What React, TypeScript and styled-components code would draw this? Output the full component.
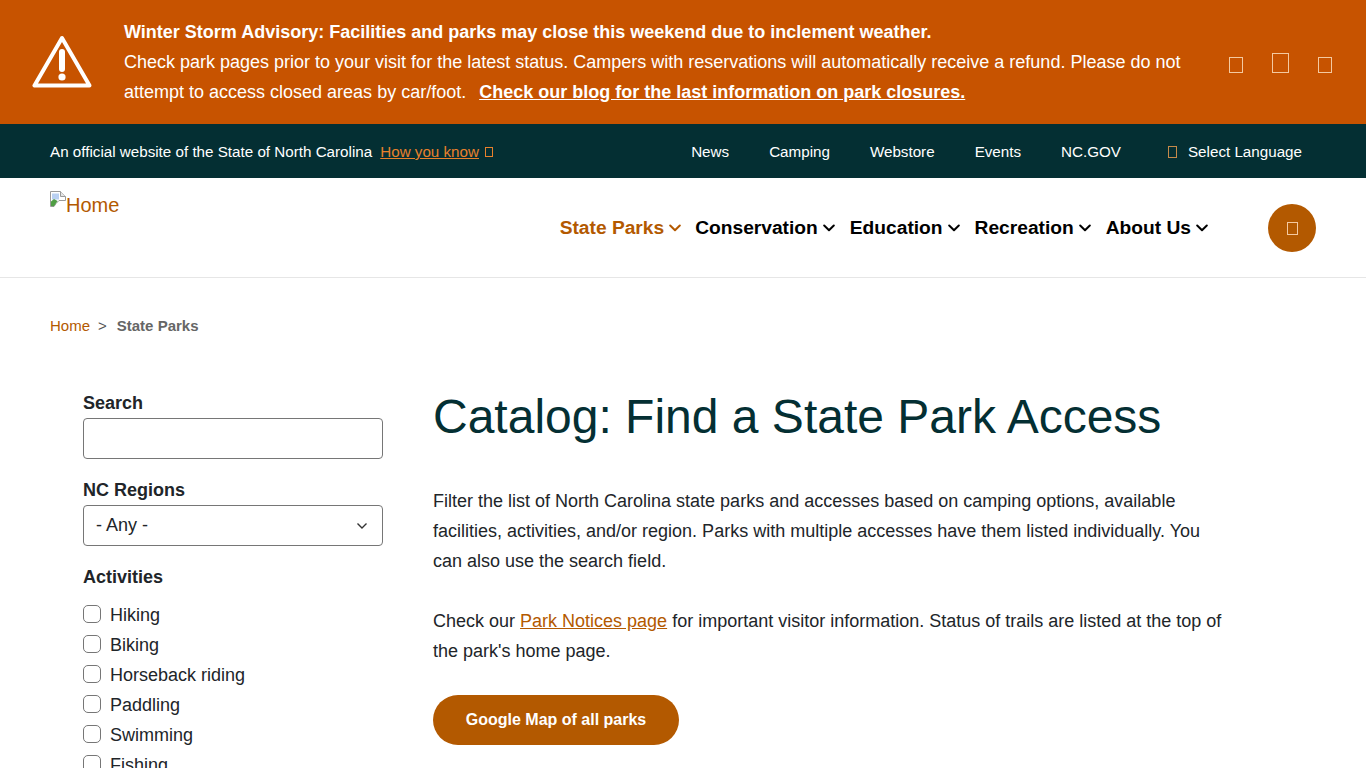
import React from "react";
import styled, { createGlobalStyle } from "styled-components";

const Global = createGlobalStyle`
  html, body { margin: 0; padding: 0; height: 768px; overflow: hidden; background: #fff; }
  body { font-family: "Liberation Sans", Arial, sans-serif; color: #212529; font-size: 18px; }
  * { box-sizing: border-box; }
`;

const ORANGE = "#c75300";
const LINK = "#b35900";
const DARK = "#042f33";

const Alert = styled.div`
  height: 124px;
  background: ${ORANGE};
  color: #fff;
  display: flex;
  align-items: flex-start;
  padding: 17px 0 0 32px;
`;
const AlertIcon = styled.svg`
  width: 60px;
  height: 54px;
  margin-top: 18px;
  flex: none;
`;
const AlertText = styled.div`
  margin-left: 32px;
  width: 1070px;
  font-size: 18px;
  line-height: 30px;
  flex: none;
`;
const AlertLink = styled.a`
  color: #fff;
  font-weight: 700;
  text-decoration: underline;
  margin-left: 13px;
`;
const AlertControls = styled.div`
  display: flex;
  align-items: flex-end;
  gap: 29px;
  margin-left: 35px;
  margin-top: 36px;
`;
const Tofu = styled.span<{ $w: number; $h: number; $c: string }>`
  display: inline-block;
  flex: none;
  width: ${(p) => p.$w}px;
  height: ${(p) => p.$h}px;
  border: 1px solid ${(p) => p.$c};
`;

const TopBar = styled.div`
  height: 54px;
  background: ${DARK};
  color: #fff;
  display: flex;
  align-items: center;
  padding: 1px 64px 0 50px;
  font-size: 15.2px;
`;
const Official = styled.span`
  margin-right: 8px;
`;
const Know = styled.a`
  color: #e8812c;
  font-size: 15.2px;
  text-decoration: underline;
  display: inline-flex;
  align-items: center;
  gap: 6px;
`;
const TopNav = styled.nav`
  margin-left: auto;
  display: flex;
  align-items: center;
  gap: 40px;
`;
const TopLink = styled.a`
  color: #fff;
  font-size: 15.2px;
`;
const Lang = styled.span`
  display: inline-flex;
  align-items: center;
  gap: 11px;
  margin-left: 7px;
`;

const Header = styled.header`
  height: 100px;
  border-bottom: 1px solid #e6e6e6;
  display: flex;
  padding: 0 50px;
  position: relative;
`;
const Logo = styled.a`
  display: inline-flex;
  align-items: flex-start;
  height: 32px;
  margin-top: 12px;
  color: ${LINK};
  font-size: 20px;
  line-height: 30px;
`;
const MainNav = styled.nav`
  margin-left: auto;
  display: flex;
  align-items: center;
  height: 100px;
  padding-bottom: 1px;
`;
const NavItem = styled.a<{ $active?: boolean; $gap: number }>`
  display: inline-flex;
  align-items: center;
  gap: 5px;
  margin-right: ${(p) => p.$gap}px;
  color: ${(p) => (p.$active ? LINK : "#000")};
  font-size: 19.2px;
  font-weight: 700;
`;
const SearchBtn = styled.button`
  width: 48px;
  height: 48px;
  border-radius: 50%;
  background: ${LINK};
  border: 0;
  padding: 0;
  margin: 1px 0 0 60px;
  display: flex;
  align-items: center;
  justify-content: center;
`;

const Crumbs = styled.div`
  padding: 39px 50px 0;
  height: 66px;
  font-size: 15px;
  line-height: 17px;
  color: #555;
  display: flex;
  gap: 8px;
`;
const CrumbLink = styled.a`
  color: ${LINK};
`;
const Current = styled.strong`
  color: #666;
  margin-left: 2px;
`;

const Content = styled.main`
  display: flex;
  padding: 0 0 0 83px;
  gap: 50px;
`;
const Side = styled.aside`
  width: 300px;
  flex: none;
  padding-top: 49px;
`;
const Label = styled.label`
  display: block;
  font-size: 18px;
  font-weight: 700;
  line-height: 21px;
  color: #212529;
  margin-bottom: 4px;
`;
const FieldBox = styled.div`
  height: 41px;
  border: 1px solid #767676;
  border-radius: 4px;
  margin-bottom: 21px;
  background: #fff;
  display: flex;
  align-items: center;
  justify-content: space-between;
  padding: 0 14px 0 12px;
  font-size: 18px;
`;
const ActivitiesLabel = styled(Label)`
  margin-bottom: 12px;
`;
const CheckRow = styled.div`
  display: flex;
  align-items: center;
  height: 30px;
  gap: 9px;
  font-size: 18px;
`;
const Box = styled.span`
  width: 18px;
  height: 18px;
  margin-top: -2px;
  border: 1px solid #767676;
  border-radius: 5px;
  background: #fff;
  flex: none;
`;
const Body = styled.div`
  width: 800px;
  flex: none;
  padding-top: 44px;
`;
const Title = styled.h1`
  margin: 0 0 40px;
  font-size: 48px;
  line-height: 58px;
  font-weight: 400;
  color: ${DARK};
`;
const Para = styled.p`
  margin: 0 0 30px;
  font-size: 18px;
  line-height: 30px;
  color: #212529;
`;
const InlineLink = styled.a`
  color: ${LINK};
  text-decoration: underline;
`;
const Cta = styled.a`
  display: inline-flex;
  align-items: center;
  justify-content: center;
  width: 246px;
  height: 50px;
  border-radius: 25px;
  background: ${LINK};
  color: #fff;
  font-size: 16px;
  font-weight: 700;
  margin-top: -1px;
`;

const Chevron = ({ c }: { c: string }) => (
  <svg width="12" height="8" viewBox="0 0 12 8" fill="none">
    <path d="M1.2 1.5 6 6.2l4.8-4.7" stroke={c} strokeWidth="2" strokeLinecap="round" strokeLinejoin="round" />
  </svg>
);

const BrokenImage = () => (
  <svg width="16" height="16" viewBox="0 0 16 16" style={{ flex: "none", marginTop: 1 }}>
    <path d="M.5.5h10l5 5v4H9l-3 3-2 3H.5z" fill="#fff" stroke="#9a9a9a" />
    <path d="M10.5.5v5h5" fill="#e4e4e4" stroke="#9a9a9a" />
    <path d="M2 2.5h7v6H2z" fill="#b9d0f2" />
    <path d="M1 15V10.5l3-2.5 3.5 2L4 15.2z" fill="#4f9e44" />
  </svg>
);

const activities = ["Hiking", "Biking", "Horseback riding", "Paddling", "Swimming", "Fishing"];
const nav: [string, number][] = [
  ["State Parks", 14],
  ["Conservation", 15],
  ["Education", 15],
  ["Recreation", 15],
  ["About Us", 0],
];

export default function App() {
  return (
    <>
      <Global />
      <Alert>
        <AlertIcon viewBox="0 0 60 54" fill="none">
          <path d="M30 3 2.5 50.5h55z" stroke="#fff" strokeWidth="4" strokeLinejoin="round" />
          <path d="M30 17v17" stroke="#fff" strokeWidth="6" strokeLinecap="round" />
          <circle cx="30" cy="42" r="3.6" fill="#fff" />
        </AlertIcon>
        <AlertText>
          <strong>Winter Storm Advisory: Facilities and parks may close this weekend due to inclement weather.</strong>
          <br />
          Check park pages prior to your visit for the latest status. Campers with reservations will automatically receive a refund. Please do not attempt to access closed areas by car/foot.
          <AlertLink>Check our blog for the last information on park closures.</AlertLink>
        </AlertText>
        <AlertControls>
          <Tofu $w={14} $h={16} $c="#f4c9a0" />
          <Tofu $w={17} $h={20} $c="#f4c9a0" />
          <Tofu $w={14} $h={16} $c="#f4c9a0" />
        </AlertControls>
      </Alert>
      <TopBar>
        <Official>An official website of the State of North Carolina</Official>
        <Know>
          How you know
          <Tofu $w={8} $h={10} $c="#e8812c" />
        </Know>
        <TopNav>
          <TopLink>News</TopLink>
          <TopLink>Camping</TopLink>
          <TopLink>Webstore</TopLink>
          <TopLink>Events</TopLink>
          <TopLink>NC.GOV</TopLink>
          <Lang>
            <Tofu $w={9} $h={12} $c="#c58a4a" />
            <TopLink>Select Language</TopLink>
          </Lang>
        </TopNav>
      </TopBar>
      <Header>
        <Logo>
          <BrokenImage />
          Home
        </Logo>
        <MainNav>
          {nav.map(([label, gap], i) => (
            <NavItem key={label} $active={i === 0} $gap={gap}>
              {label}
              <Chevron c={i === 0 ? LINK : "#000"} />
            </NavItem>
          ))}
          <SearchBtn aria-label="Search">
            <Tofu $w={11} $h={13} $c="#f4c9a0" />
          </SearchBtn>
        </MainNav>
      </Header>
      <Crumbs>
        <CrumbLink>Home</CrumbLink>
        <span>&gt;</span>
        <Current>State Parks</Current>
      </Crumbs>
      <Content>
        <Side>
          <Label>Search</Label>
          <FieldBox />
          <Label>NC Regions</Label>
          <FieldBox>
            - Any -
            <svg width="12" height="8" viewBox="0 0 12 8" fill="none">
              <path d="M1.5 1.5 6 6l4.5-4.5" stroke="#333" strokeWidth="1.4" />
            </svg>
          </FieldBox>
          <ActivitiesLabel>Activities</ActivitiesLabel>
          {activities.map((a) => (
            <CheckRow key={a}>
              <Box />
              {a}
            </CheckRow>
          ))}
        </Side>
        <Body>
          <Title>Catalog: Find a State Park Access</Title>
          <Para>
            Filter the list of North Carolina state parks and accesses based on camping options, available facilities, activities, and/or region. Parks with multiple accesses have them listed individually. You can also use the search field.
          </Para>
          <Para>
            Check our <InlineLink>Park Notices page</InlineLink> for important visitor information. Status of trails are listed at the top of the park's home page.
          </Para>
          <Cta>Google Map of all parks</Cta>
        </Body>
      </Content>
    </>
  );
}
